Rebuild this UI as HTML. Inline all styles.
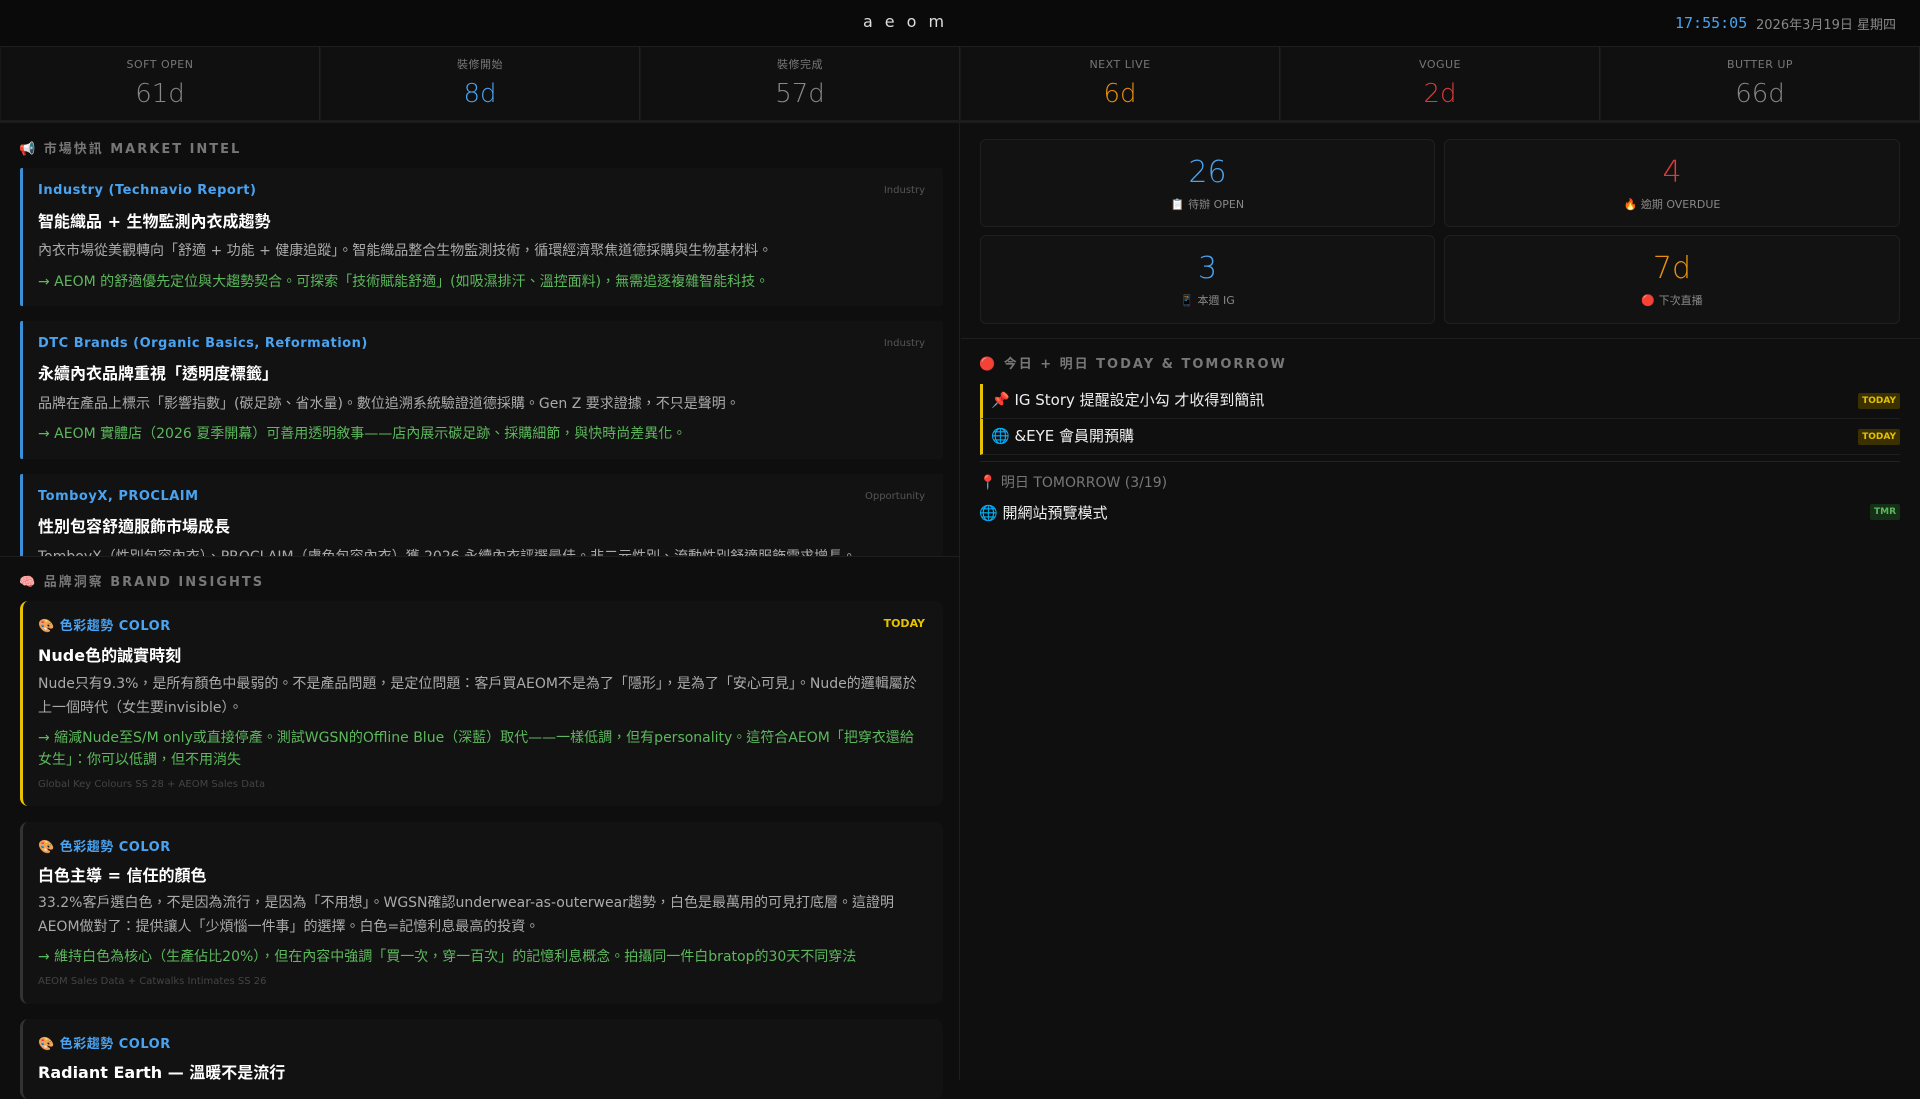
<!DOCTYPE html>
<html><head><meta charset="utf-8"><style>
*{margin:0;padding:0;box-sizing:border-box}
body{width:1920px;height:1080px;overflow:hidden;background:#0e0e0e;font-family:"DejaVu Sans","Noto Sans CJK TC",sans-serif;color:#ccc;position:relative}
.abs{position:absolute}
#hdr{left:0;top:0;width:1920px;height:47px;background:#0a0a0a;border-bottom:1px solid #1e1e1e}
#logo{left:863px;top:12px;font-size:16px;letter-spacing:12px;color:#ddd}
#clock{left:1675px;top:14px;font-size:15px;color:#4aa3f0;font-family:"DejaVu Sans Mono",monospace}
#date{left:1756px;top:14px;font-size:13px;color:#888}
#cd{left:0;top:47px;width:1920px;height:76px;background:#101010;border-bottom:3px solid #1c1c1c;display:flex}
.cdc{flex:1;border-right:1px solid #222;border-left:1px solid #181818;text-align:center}
.cdl{font-size:11px;color:#777;margin-top:11px;letter-spacing:.5px;height:14px;line-height:14px}
.cdn{font-size:26px;font-weight:200;margin-top:7px;color:#888}
#left{left:0;top:123px;width:960px;height:957px;border-right:1px solid #1e1e1e;background:#0e0e0e}
.sh{font-size:13px;font-weight:bold;letter-spacing:2px;color:#777}
.card{position:absolute;left:20px;width:923px;background:#121212;border-left:3px solid #3a8fd8;border-radius:2px}
.src{position:absolute;left:15px;font-size:13px;font-weight:bold;color:#4aa3f0;letter-spacing:.5px}
.tag{position:absolute;right:18px;font-size:10px;color:#555}
.tt{position:absolute;left:15px;font-size:16px;font-weight:bold;color:#fff}
.bd{position:absolute;left:15px;right:20px;font-size:14px;color:#aaa;line-height:24px}
.gr{position:absolute;left:15px;right:20px;font-size:14px;color:#5cb85c;line-height:22px}
.sm{position:absolute;left:15px;font-size:10px;color:#444}
#right{left:961px;top:123px;width:959px;height:957px;background:#0f0f0f}
.box{position:absolute;background:#121212;border:1px solid #1f1f1f;border-radius:6px;text-align:center}
.bn{font-size:30px;font-weight:200;margin-top:15px}
.bl{font-size:11px;color:#888;margin-top:6px}
.row{position:absolute;left:980px;width:920px;border-left:3px solid #e6c200;border-bottom:1px solid #1e1e1e;font-size:15px;color:#eee;padding-left:8px}
.badge{position:absolute;right:0;font-size:9px;font-weight:bold;padding:2px 4px;border-radius:2px}
</style></head><body>
<div id="hdr" class="abs"></div>
<div id="logo" class="abs">aeom</div>
<div id="clock" class="abs">17:55:05</div>
<div id="date" class="abs">2026年3月19日 星期四</div>
<div id="cd" class="abs">
<div class="cdc"><div class="cdl">SOFT OPEN</div><div class="cdn">61d</div></div>
<div class="cdc"><div class="cdl">裝修開始</div><div class="cdn" style="color:#4aa3f0">8d</div></div>
<div class="cdc"><div class="cdl">裝修完成</div><div class="cdn">57d</div></div>
<div class="cdc"><div class="cdl">NEXT LIVE</div><div class="cdn" style="color:#e8900c">6d</div></div>
<div class="cdc"><div class="cdl">VOGUE</div><div class="cdn" style="color:#e03a3a">2d</div></div>
<div class="cdc"><div class="cdl">BUTTER UP</div><div class="cdn">66d</div></div>
</div>
<div id="left" class="abs"></div>
<div class="abs sh" style="left:19px;top:138px">📢 市場快訊 MARKET INTEL</div>
<div class="abs" style="left:0;top:168px;width:960px;height:388px;overflow:hidden">
 <div class="card" style="top:0;height:138px"><div class="src" style="top:15px">Industry (Technavio Report)</div><div class="tag" style="top:17px">Industry</div><div class="tt" style="top:40px">智能織品 + 生物監測內衣成趨勢</div><div class="bd" style="top:71px">內衣市場從美觀轉向「舒適 + 功能 + 健康追蹤」。智能織品整合生物監測技術，循環經濟聚焦道德採購與生物基材料。</div><div class="gr" style="top:103px">→ AEOM 的舒適優先定位與大趨勢契合。可探索「技術賦能舒適」(如吸濕排汗、溫控面料)，無需追逐複雜智能科技。</div></div>
 <div class="card" style="top:153px;height:138px"><div class="src" style="top:15px">DTC Brands (Organic Basics, Reformation)</div><div class="tag" style="top:17px">Industry</div><div class="tt" style="top:39px">永續內衣品牌重視「透明度標籤」</div><div class="bd" style="top:71px">品牌在產品上標示「影響指數」(碳足跡、省水量)。數位追溯系統驗證道德採購。Gen Z 要求證據，不只是聲明。</div><div class="gr" style="top:102px">→ AEOM 實體店（2026 夏季開幕）可善用透明敘事——店內展示碳足跡、採購細節，與快時尚差異化。</div></div>
 <div class="card" style="top:306px;height:138px"><div class="src" style="top:15px">TomboyX, PROCLAIM</div><div class="tag" style="top:17px">Opportunity</div><div class="tt" style="top:39px">性別包容舒適服飾市場成長</div><div class="bd" style="top:71px">TomboyX（性別包容內衣）、PROCLAIM（膚色包容內衣）獲 2026 永續內衣評選最佳。非二元性別、流動性別舒適服飾需求增長。</div></div>
</div>
<div class="abs" style="left:0;top:556px;width:960px;border-top:1px solid #1e1e1e"></div>
<div class="abs sh" style="left:19px;top:571px">🧠 品牌洞察 BRAND INSIGHTS</div>
<div class="card" style="top:601px;height:205px;border-left-color:#e6c200;border-radius:8px">
 <div class="src" style="top:14px">🎨 色彩趨勢 COLOR</div><div class="abs" style="right:18px;top:16px;font-size:11px;font-weight:bold;color:#e6c200">TODAY</div>
 <div class="tt" style="top:41px">Nude色的誠實時刻</div>
 <div class="bd" style="top:71px">Nude只有9.3%，是所有顏色中最弱的。不是產品問題，是定位問題：客戶買AEOM不是為了「隱形」，是為了「安心可見」。Nude的邏輯屬於上一個時代（女生要invisible）。</div>
 <div class="gr" style="top:126px">→ 縮減Nude至S/M only或直接停產。測試WGSN的Offline Blue（深藍）取代——一樣低調，但有personality。這符合AEOM「把穿衣還給女生」：你可以低調，但不用消失</div>
 <div class="sm" style="top:178px">Global Key Colours SS 28 + AEOM Sales Data</div>
</div>
<div class="card" style="top:822px;height:182px;border-left-color:#333;border-radius:8px">
 <div class="src" style="top:14px">🎨 色彩趨勢 COLOR</div>
 <div class="tt" style="top:40px">白色主導 = 信任的顏色</div>
 <div class="bd" style="top:69px">33.2%客戶選白色，不是因為流行，是因為「不用想」。WGSN確認underwear-as-outerwear趨勢，白色是最萬用的可見打底層。這證明AEOM做對了：提供讓人「少煩惱一件事」的選擇。白色=記憶利息最高的投資。</div>
 <div class="gr" style="top:124px">→ 維持白色為核心（生產佔比20%），但在內容中強調「買一次，穿一百次」的記憶利息概念。拍攝同一件白bratop的30天不同穿法</div>
 <div class="sm" style="top:154px">AEOM Sales Data + Catwalks Intimates SS 26</div>
</div>
<div class="card" style="top:1019px;height:80px;border-left-color:#333;border-radius:8px">
 <div class="src" style="top:14px">🎨 色彩趨勢 COLOR</div>
 <div class="tt" style="top:40px">Radiant Earth — 溫暖不是流行</div>
</div>
<div id="right" class="abs"></div>
<div class="box" style="left:980px;top:139px;width:455px;height:88px"><div class="bn" style="color:#4aa3f0">26</div><div class="bl">📋 待辦 OPEN</div></div>
<div class="box" style="left:1444px;top:139px;width:456px;height:88px"><div class="bn" style="color:#e03a3a">4</div><div class="bl">🔥 逾期 OVERDUE</div></div>
<div class="box" style="left:980px;top:235px;width:455px;height:89px"><div class="bn" style="color:#4aa3f0">3</div><div class="bl">📱 本週 IG</div></div>
<div class="box" style="left:1444px;top:235px;width:456px;height:89px"><div class="bn" style="color:#e8900c">7d</div><div class="bl">🔴 下次直播</div></div>
<div class="abs" style="left:961px;top:338px;width:959px;border-top:1px solid #1e1e1e"></div>
<div class="abs sh" style="left:979px;top:353px">🔴 今日 + 明日 TODAY &amp; TOMORROW</div>
<div class="row" style="top:384px;height:35px;line-height:33px">📌 IG Story 提醒設定小勾 才收得到簡訊<span class="badge" style="top:9px;line-height:12px;background:#3a3000;color:#e6c200">TODAY</span></div>
<div class="row" style="top:419px;height:36px;line-height:34px">🌐 &amp;EYE 會員開預購<span class="badge" style="top:10px;line-height:12px;background:#3a3000;color:#e6c200">TODAY</span></div>
<div class="abs" style="left:980px;top:461px;width:920px;border-top:1px solid #222"></div>
<div class="abs" style="left:979px;top:472px;font-size:14px;color:#777">📍 明日 TOMORROW (3/19)</div>
<div class="abs" style="left:979px;top:502px;width:921px;font-size:15px;color:#eee">🌐 開網站預覽模式<span class="badge" style="top:2px;line-height:12px;background:#163018;color:#5cb85c">TMR</span></div>
</body></html>
